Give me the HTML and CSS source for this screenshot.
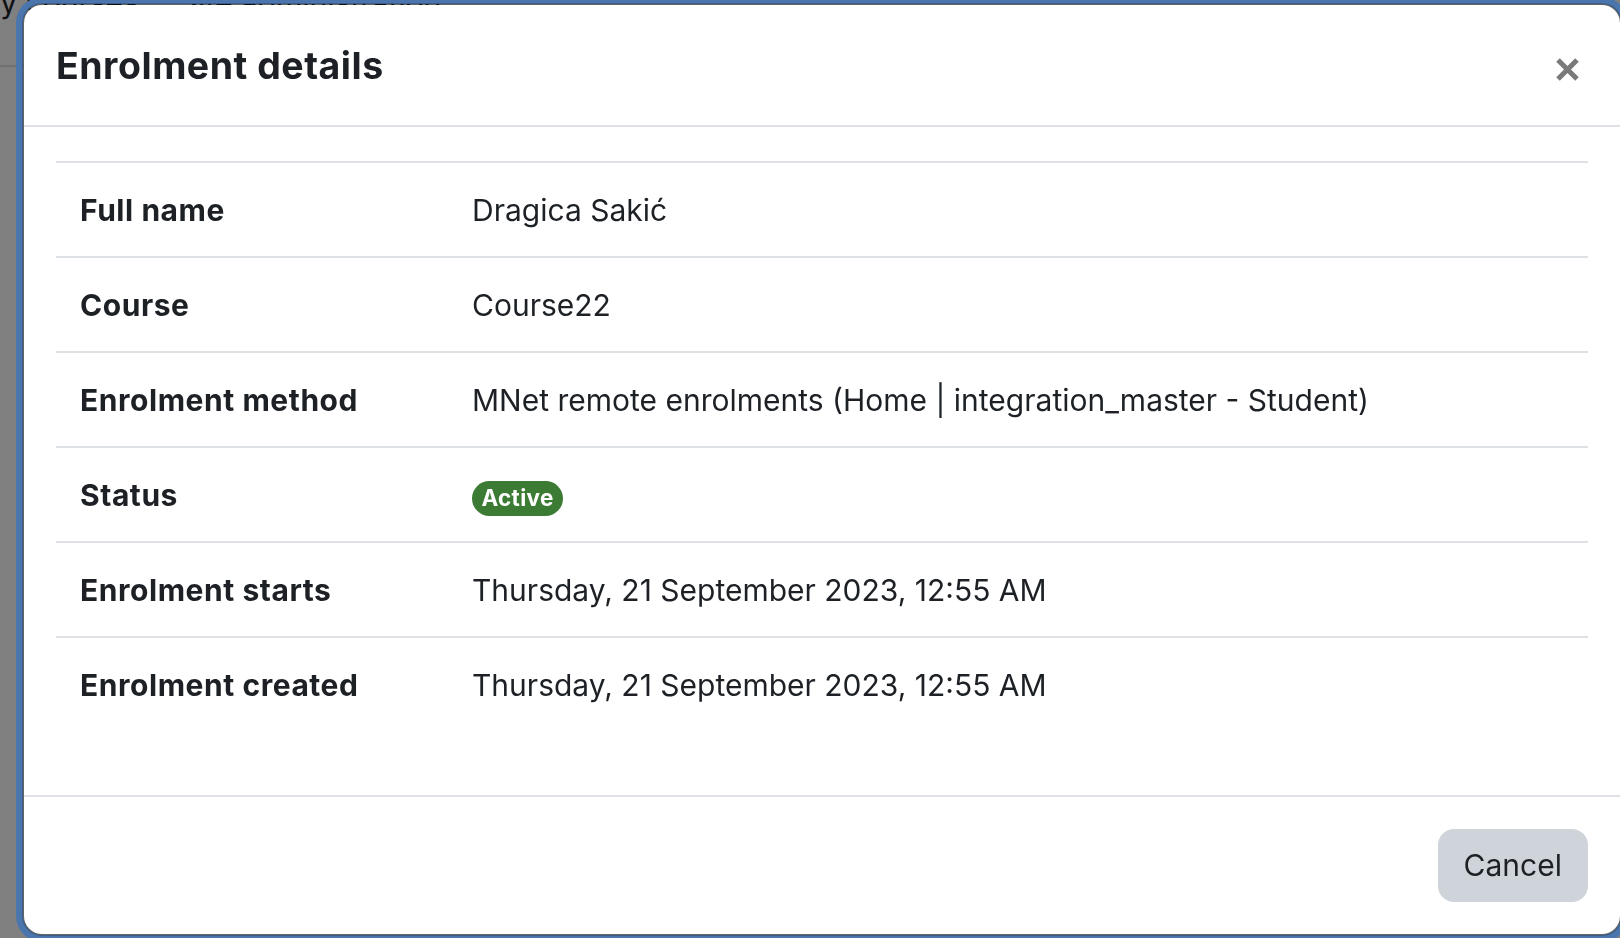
FILE: index.html
```html
<!DOCTYPE html>
<html lang="en">
<head>
<meta charset="utf-8">
<title>Enrolment details</title>
<link rel="stylesheet" href="styles.css">
</head>
<body>
<div class="page">
  <nav class="topnav">
    <span class="navitem">My courses</span>
    <span class="navitem">Site administration</span>
  </nav>
</div>
<div class="modal" role="dialog" aria-labelledby="modal-title">
  <div class="modal-content">
    <div class="modal-header">
      <h5 class="modal-title" id="modal-title">Enrolment details</h5>
      <button class="close" type="button" aria-label="Close">
        <svg viewBox="0 0 23 23" width="23" height="23" aria-hidden="true">
          <path d="M2 2 L21 21 M21 2 L2 21" stroke="#7a7a7a" stroke-width="5" fill="none"/>
        </svg>
      </button>
    </div>
    <div class="modal-body">
      <table class="details">
        <tbody>
          <tr><th>Full name</th><td>Dragica Sakić</td></tr>
          <tr><th>Course</th><td>Course22</td></tr>
          <tr><th>Enrolment method</th><td>MNet remote enrolments (Home | integration_master - Student)</td></tr>
          <tr><th>Status</th><td><span class="badge">Active</span></td></tr>
          <tr><th>Enrolment starts</th><td>Thursday, 21 September 2023, 12:55 AM</td></tr>
          <tr><th>Enrolment created</th><td>Thursday, 21 September 2023, 12:55 AM</td></tr>
        </tbody>
      </table>
    </div>
    <div class="modal-footer">
      <button class="btn" type="button">Cancel</button>
    </div>
  </div>
</div>
</body>
</html>
```
FILE: styles.css
```css
html, body {
  margin: 0;
  height: 100%;
  overflow: hidden;
}

body {
  background: #808080;
  font-family: Inter, "Noto Sans", "Liberation Sans", sans-serif;
  color: #1d2125;
}

/* page behind the backdrop */
.topnav {
  display: flex;
  gap: 40px;
  margin-top: -20px;
  margin-left: -27px;
  height: 85px;
  border-bottom: 2px solid #6f7173;
  font-size: 30px;
  line-height: 45px;
  color: #0f1013;
}

/* dialog */
.modal-content {
  position: fixed;
  left: 22px;
  top: 3px;
  width: 1600px;
  box-sizing: border-box;
  background: #fff;
  background-clip: padding-box;
  border: 2px solid rgba(0, 0, 0, 0.2);
  border-radius: 20px;
  box-shadow: 0 0 0 6px #4a75ad;
}

.modal-header {
  display: flex;
  align-items: flex-start;
  padding: 33px 32px 31px;
  border-bottom: 2px solid #dee2e6;
}

.modal-title {
  margin: 0;
  font-size: 37.5px;
  line-height: 1.5;
  font-weight: 700;
  letter-spacing: 0.5px;
}

.close {
  display: block;
  margin: 20px 9px 0 auto;
  padding: 0;
  width: 23px;
  height: 23px;
  border: 0;
  background: none;
}

.close svg {
  display: block;
}

.modal-body {
  padding: 34px 32px 32px;
}

.details {
  width: 100%;
  border-collapse: separate;
  border-spacing: 0;
  margin-bottom: 32px;
}

.details th,
.details td {
  padding: 25px 24px 23px;
  border-top: 2px solid #dee2e6;
  text-align: left;
  vertical-align: top;
  font-size: 30px;
  line-height: 45px;
}

.details th {
  width: 392px;
  box-sizing: border-box;
  font-weight: 700;
  letter-spacing: 0.55px;
}

.details td {
  font-weight: 400;
}

.badge {
  display: inline-block;
  padding: 6.5px 9.5px;
  font-size: 22.5px;
  font-weight: 700;
  line-height: 1;
  letter-spacing: 0.3px;
  color: #fff;
  background: #3c7b34;
  border-radius: 160px;
}

.modal-footer {
  display: flex;
  justify-content: flex-end;
  padding: 24px;
  border-top: 2px solid #dee2e6;
}

.btn {
  margin: 8px;
  padding: 12px 24px;
  font-family: inherit;
  font-size: 30px;
  line-height: 45px;
  color: #1d2125;
  background: #ced4da;
  border: 2px solid #ced4da;
  border-radius: 16px;
}
```
